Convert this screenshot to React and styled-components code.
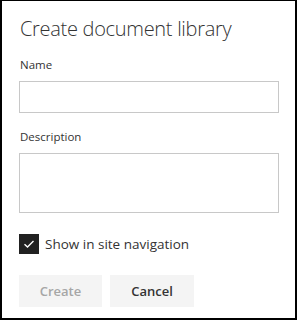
import React, { useState } from 'react';
import styled, { createGlobalStyle } from 'styled-components';

const GlobalStyle = createGlobalStyle`
  html, body {
    margin: 0;
    padding: 0;
    background: #ffffff;
  }
  body {
    font-family: "Open Sans", "Liberation Sans", sans-serif;
  }
`

const Panel = styled.div`
  box-sizing: border-box;
  width: 297px;
  height: 320px;
  border-style: solid;
  border-color: #000000;
  border-width: 1px 2px 2px 2px;
  padding: 13px 17px 0 17px;
  display: flex;
  flex-direction: column;
  background: #ffffff;
`

const Title = styled.h1`
  margin: 0;
  padding-left: 1px;
  font-family: "Open Sans", sans-serif;
  font-weight: 300;
  font-size: 20px;
  line-height: 30px;
  color: #333333;
  letter-spacing: -0.3px;
`

const Field = styled.div`
  display: flex;
  flex-direction: column;
  margin-top: ${p => p.$top}px;
`

const Label = styled.label`
  font-family: "Open Sans", sans-serif;
  font-size: 11.5px;
  line-height: 16px;
  height: 16px;
  color: #333333;
  margin-bottom: 8px;
  padding-left: 1px;
`

const TextBox = styled.input`
  box-sizing: border-box;
  width: 260px;
  height: 32px;
  border: 1px solid #c8c8c8;
  margin: 0;
  padding: 0 8px;
  outline: none;
  background: #ffffff;
`

const TextArea = styled.textarea`
  box-sizing: border-box;
  width: 260px;
  height: 60px;
  border: 1px solid #c8c8c8;
  margin: 0;
  padding: 6px 8px;
  resize: none;
  outline: none;
  display: block;
`

const CheckRow = styled.label`
  display: flex;
  align-items: center;
  gap: 6px;
  height: 20px;
  margin-top: 21px;
  cursor: pointer;
`

const Box = styled.span`
  box-sizing: border-box;
  width: 20px;
  height: 20px;
  display: flex;
  align-items: center;
  justify-content: center;
  background: ${p => (p.$checked ? '#212121' : '#ffffff')};
  border: 1px solid ${p => (p.$checked ? '#212121' : '#a6a6a6')};
`

const CheckText = styled.span`
  font-family: "Open Sans", sans-serif;
  font-size: 13.5px;
  color: #333333;
`

const Actions = styled.div`
  display: flex;
  gap: 8px;
  margin-top: 21px;
`

const Button = styled.button`
  box-sizing: border-box;
  width: ${p => p.$w}px;
  height: 32px;
  border: none;
  background: #f4f4f4;
  font-family: "Open Sans", sans-serif;
  font-size: 13px;
  font-weight: 600;
  color: ${p => (p.disabled ? '#a6a6a6' : '#333333')};
  cursor: ${p => (p.disabled ? 'default' : 'pointer')};
  padding: 0;
`

export default function App() {
  const [show, setShow] = useState(true);

  return (
    <>
      <GlobalStyle />
      <Panel>
        <Title>Create document library</Title>
        <Field $top={13}>
          <Label>Name</Label>
          <TextBox type="text" />
        </Field>
        <Field $top={16}>
          <Label>Description</Label>
          <TextArea />
        </Field>
        <CheckRow onClick={() => setShow(!show)}>
          <Box $checked={show}>
            {show && (
              <svg width="12" height="12" viewBox="0 0 12 12">
                <path d="M1.5 6.2 L4.5 9 L10.5 3" fill="none" stroke="#ffffff" strokeWidth="1.4" />
              </svg>
            )}
          </Box>
          <CheckText>Show in site navigation</CheckText>
        </CheckRow>
        <Actions>
          <Button $w={83} disabled>Create</Button>
          <Button $w={84}>Cancel</Button>
        </Actions>
      </Panel>
    </>
  );
}
